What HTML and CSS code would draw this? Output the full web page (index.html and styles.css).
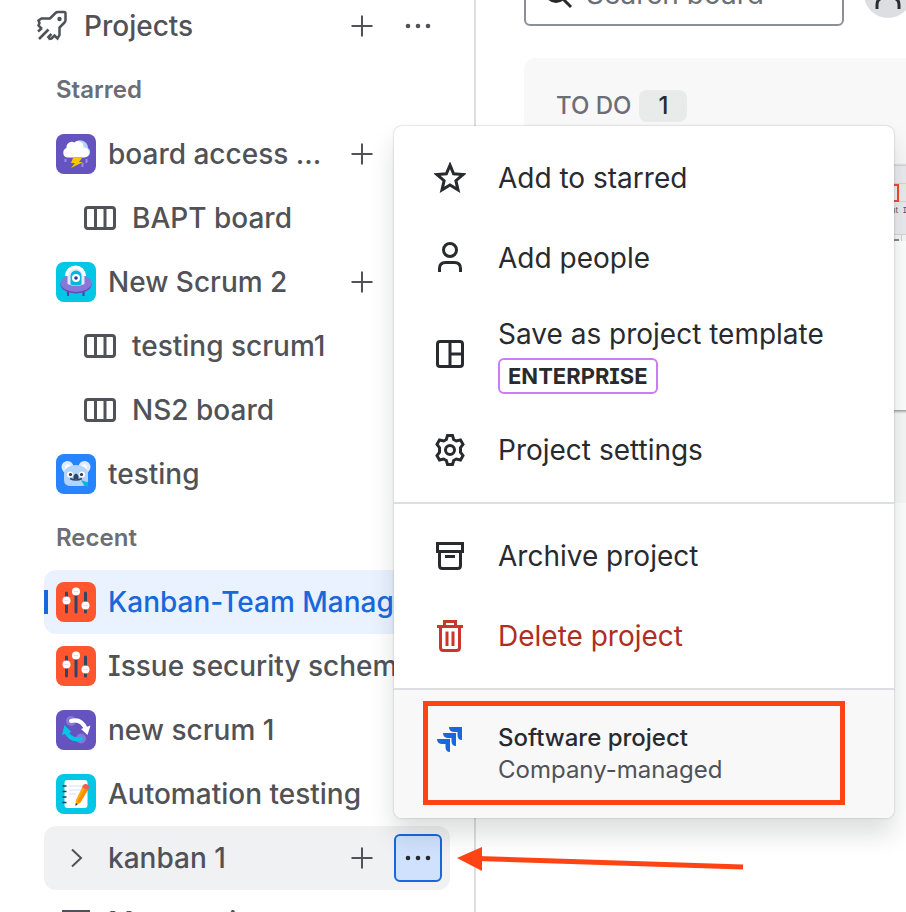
FILE: index.html
```
<!DOCTYPE html>
<html lang="en">
<head>
  <meta charset="UTF-8">
  <meta name="viewport" content="width=device-width, initial-scale=1.0">
  <title>Projects</title>
  <link rel="stylesheet" href="styles.css">
</head>
<body>
  <!-- shared icons -->
  <svg class="sprite" aria-hidden="true">
    <symbol id="icon-plus" viewBox="0 0 32 32"><path d="M16 5.500v21M5.500 16h21"/></symbol>
    <symbol id="icon-more" viewBox="0 0 32 32">
      <g fill="currentColor" stroke="none"><circle cx="6" cy="16" r="2.300"/><circle cx="16" cy="16" r="2.300"/><circle cx="26" cy="16" r="2.300"/></g>
    </symbol>
    <symbol id="icon-board" viewBox="0 0 32 32"><rect x="1.500" y="5.500" width="29" height="21" rx="2.500"/><path d="M11.500 5v22M21 5v22"/></symbol>
    <symbol id="avatar-kanban" viewBox="0 0 40 40">
      <rect width="40" height="40" rx="8" fill="#ff5630"/>
      <path d="M10.500 11v19M20 11v19M29.500 11v19" stroke="#344563" stroke-width="3" stroke-linecap="round"/>
      <g fill="#fff"><circle cx="10.500" cy="18.500" r="4"/><circle cx="20" cy="9.500" r="4"/><circle cx="29.500" cy="23.500" r="4"/></g>
      <path d="M8.500 18.500h4M18 9.500h4M27.500 23.500h4" stroke="#dfe1e6"/>
    </symbol>
  </svg>

  <div class="app">
    <nav class="sidebar">
      <div class="nav-row nav-top">
        <svg class="icon rocket" viewBox="0 0 32 32"><path d="M6 19L2.500 15.500 3.500 13 2.500 10.500 5.500 8.500H14L19.500 3q1-1 2.500-1H28q1.500 0 1.500 1.500V10q0 1.500-1 2.500L23.500 17.500V25L21.500 28.500 18.500 25.500 15.500 28.500 12.500 29M3 29l9.500-9.500M2 21.500L6 18M11.500 28l4-4"/><circle cx="23.500" cy="9" r="2.200" fill="currentColor" stroke="none"/></svg>
        <span class="nav-label">Projects</span>
        <button class="icon-btn" aria-label="Create project"><svg class="icon"><use href="#icon-plus"/></svg></button>
        <button class="icon-btn" aria-label="More actions"><svg class="icon"><use href="#icon-more"/></svg></button>
      </div>

      <h2 class="nav-heading">Starred</h2>
      <div class="nav-row has-action">
        <svg class="avatar" viewBox="0 0 40 40">
          <rect width="40" height="40" rx="8" fill="#6554c0"/>
          <path d="M20 23h10a5 5 0 0 0 2-9 8 8 0 0 0-13-6z" fill="#b3d4ff"/>
          <path d="M11 23.500a5 5 0 0 1-.5-9.500 5.500 5.500 0 0 1 8-5.500 5.500 5.500 0 0 1 9 5 5 5 0 0 1 1 10z" fill="#fff"/>
          <path d="M17 24h9l-3 4h4l-12 6 4-5h-4z" fill="#ffc400"/>
          <path d="M9.500 25v3M30.500 25v4M26.500 29v4" stroke="#998dd9" stroke-width="2"/>
        </svg>
        <a class="nav-label" href="#">board access ...</a>
        <button class="icon-btn" aria-label="Create board"><svg class="icon"><use href="#icon-plus"/></svg></button>
      </div>
      <div class="nav-row nested">
        <svg class="icon"><use href="#icon-board"/></svg>
        <a class="nav-label" href="#">BAPT board</a>
      </div>
      <div class="nav-row has-action">
        <svg class="avatar" viewBox="0 0 40 40">
          <rect width="40" height="40" rx="8" fill="#00c7e5"/>
          <path d="M12 28v6M27.500 28v6" stroke="#5243aa" stroke-width="2.200"/>
          <ellipse cx="20" cy="22.500" rx="15.500" ry="9" fill="#5e4db2"/>
          <ellipse cx="20" cy="21" rx="15.500" ry="9" fill="#8777d9"/>
          <path d="M11.500 22V14a8.500 8.500 0 0 1 17 0v8q-8.500 4-17 0z" fill="#eae6ff"/>
          <path d="M10.500 14a9 9 0 0 1 18 0" fill="none" stroke="#fff" stroke-width="3"/>
          <path d="M14.500 22.500V14a5.500 5.500 0 0 1 11 0v8.500q-5.500 2-11 0z" fill="#00b8d9"/>
          <circle cx="20" cy="16" r="4" fill="#fff"/><circle cx="20" cy="16" r="1.800" fill="#403294"/>
        </svg>
        <a class="nav-label" href="#">New Scrum 2</a>
        <button class="icon-btn" aria-label="Create board"><svg class="icon"><use href="#icon-plus"/></svg></button>
      </div>
      <div class="nav-row nested">
        <svg class="icon"><use href="#icon-board"/></svg>
        <a class="nav-label" href="#">testing scrum1</a>
      </div>
      <div class="nav-row nested">
        <svg class="icon"><use href="#icon-board"/></svg>
        <a class="nav-label" href="#">NS2 board</a>
      </div>
      <div class="nav-row">
        <svg class="avatar" viewBox="0 0 40 40">
          <rect width="40" height="40" rx="8" fill="#2684ff"/>
          <circle cx="11.500" cy="13" r="6" fill="#deebff"/><circle cx="28.500" cy="13" r="6" fill="#deebff"/>
          <circle cx="12" cy="13.500" r="3" fill="#fff"/><circle cx="28" cy="13.500" r="3" fill="#fff"/>
          <path d="M8 18q3-7 12-7t12 7v8q0 6-7 6H15q-7 0-7-6z" fill="#b3d4ff"/>
          <circle cx="14" cy="20.500" r="3" fill="#fff"/><circle cx="26" cy="20.500" r="3" fill="#fff"/>
          <circle cx="14.500" cy="20.500" r="1.600" fill="#253858"/><circle cx="25.500" cy="20.500" r="1.600" fill="#253858"/>
          <path d="M17.500 25v-3q2.500-5 5 0v3z" fill="#344563"/>
          <path d="M14 24.500q6 3 12 0" fill="none" stroke="#344563" stroke-width="1.500"/>
          <path d="M25 26l7 2.500v4.500l-4-2z" fill="#00b8d9"/>
        </svg>
        <a class="nav-label" href="#">testing</a>
      </div>

      <h2 class="nav-heading">Recent</h2>
      <div class="nav-row selected">
        <svg class="avatar"><use href="#avatar-kanban"/></svg>
        <a class="nav-label" href="#">Kanban-Team Managed</a>
      </div>
      <div class="nav-row">
        <svg class="avatar"><use href="#avatar-kanban"/></svg>
        <a class="nav-label" href="#">Issue security scheme</a>
      </div>
      <div class="nav-row">
        <svg class="avatar" viewBox="0 0 40 40">
          <rect width="40" height="40" rx="8" fill="#6554c0"/>
          <circle cx="15" cy="11" r="5" fill="#8777d9"/><circle cx="25" cy="28.500" r="5" fill="#8777d9"/>
          <path d="M15 11q10-3 15 8" fill="none" stroke="#fff" stroke-width="4" stroke-linecap="round"/><path d="M25 19l9.500-3.500-3 9.500z" fill="#fff"/>
          <path d="M25 28.500q-10 3-15-7" fill="none" stroke="#00c7e5" stroke-width="4" stroke-linecap="round"/><path d="M6 25l2.500-10 7 7z" fill="#00c7e5"/>
        </svg>
        <a class="nav-label" href="#">new scrum 1</a>
      </div>
      <div class="nav-row">
        <svg class="avatar" viewBox="0 0 40 40">
          <rect width="40" height="40" rx="8" fill="#00c7e5"/>
          <rect x="8.500" y="6" width="23" height="28" rx="3" fill="#fff"/>
          <path d="M13 12h14M13 16h12M13 20h7" stroke="#deebff" stroke-width="1.500"/>
          <path d="M6.500 12h4M6.500 17.500h4M6.500 23h4M6.500 28.500h4" stroke="#253858" stroke-width="1.500"/>
          <path d="M26 13.500l5.500 3-7.500 12.500-4.500 3 .5-6z" fill="#ffab00"/><path d="M28.500 15l3 1.500-7.500 12.500-2.500-1.500z" fill="#ff8b00"/>
          <path d="M26 13.500q1-4 4-3.500 4 1 3 4l-1.500 2.500z" fill="#f15b50"/><path d="M19.800 29l1.800 1-2.100 2z" fill="#253858"/>
        </svg>
        <a class="nav-label" href="#">Automation testing</a>
      </div>
      <div class="nav-row hovered">
        <svg class="avatar chevron" viewBox="0 0 40 40"><path d="M16 11.500l9 8.500-9 8.500"/></svg>
        <a class="nav-label" href="#">kanban 1</a>
        <button class="icon-btn" aria-label="Create board"><svg class="icon"><use href="#icon-plus"/></svg></button>
        <button class="icon-btn pressed" aria-label="More actions" aria-expanded="true"><svg class="icon"><use href="#icon-more"/></svg></button>
      </div>
      <div class="nav-row">
        <svg class="avatar" viewBox="0 0 40 40"><path d="M6 9.500h28M6 20h28M6 30h28" stroke="currentColor" stroke-width="3"/></svg>
        <a class="nav-label" href="#">More projects</a>
      </div>
    </nav>

    <main class="board">
      <div class="toolbar">
        <label class="search">
          <svg class="icon" viewBox="0 0 32 32"><circle cx="14" cy="14" r="9.500"/><path d="M21 21l8 8"/></svg>
          <input type="text" placeholder="Search board" aria-label="Search board">
        </label>
        <span class="user"><svg class="icon" viewBox="0 0 32 32"><circle cx="16" cy="8" r="6"/><path d="M5 31v-4q0-7 7-7h8q7 0 7 7v4"/></svg></span>
      </div>
      <section class="column">
        <h2 class="column-title">TO DO <span class="count">1</span></h2>
        <article class="card">
          <svg class="card-cover" viewBox="0 0 380 76">
            <rect width="380" height="76" fill="#ebecef"/>
            <path d="M0 .5h380M0 18.500h380M0 36.500h380M0 69.500h380" stroke="#d3d5d9"/>
            <rect x="310" y="20" width="56" height="16" fill="#f1f2f4" stroke="#f4492e" stroke-width="2"/>
            <rect y="70" width="380" height="6" fill="#f7f7f8"/>
            <path d="M369.500 70v6" stroke="#d3d5d9"/>
            <path d="M360 75h7" stroke="#85888e" stroke-width="2"/>
            <text class="cover-text" x="366" y="48" text-anchor="end">Client</text><text class="cover-text" x="371" y="48">I</text>
          </svg>
        </article>
      </section>
    </main>

    <div class="menu" role="menu">
      <div class="menu-group">
        <button class="menu-item" role="menuitem">
          <svg class="icon" viewBox="0 0 32 32"><path d="M16 3.200l3.600 8.600 9.300.8-7 6.100 2.100 9.100L16 23l-8 4.800 2.100-9.100-7-6.100 9.300-.8z"/></svg>
          <span>Add to starred</span>
        </button>
        <button class="menu-item" role="menuitem">
          <svg class="icon" viewBox="0 0 32 32"><circle cx="16" cy="8" r="6.500"/><path d="M5.500 30v-3.500q0-6 6-6h9q6 0 6 6V30"/></svg>
          <span>Add people</span>
        </button>
        <button class="menu-item" role="menuitem">
          <svg class="icon" viewBox="0 0 32 32"><rect x="3.500" y="3.500" width="25" height="25" rx="2.500"/><path d="M16 3v26M16 16h12"/></svg>
          <span class="menu-text">Save as project template <span class="lozenge">ENTERPRISE</span></span>
        </button>
        <button class="menu-item" role="menuitem">
          <svg class="icon" viewBox="0 0 32 32"><path d="M13.500 1.500h5l1.200 4 2.600 1.500 4.200-1 2.500 4.300-2.500 3.400v4.600l2.500 3.400-2.500 4.300-4.200-1-2.600 1.500-1.200 4h-5l-1.200-4L9.700 25l-4.200 1L3 21.700l2.500-3.400v-4.600L3 10.300 5.500 6l4.200 1 2.600-1.500z"/><circle cx="16" cy="16" r="4.500"/></svg>
          <span>Project settings</span>
        </button>
      </div>
      <div class="menu-group">
        <button class="menu-item" role="menuitem">
          <svg class="icon" viewBox="0 0 32 32"><path d="M3.500 3.500h25v8h-25zM5.500 11.500v14q0 3 3 3h15q3 0 3-3v-14M11 16.500h10"/></svg>
          <span>Archive project</span>
        </button>
        <button class="menu-item danger" role="menuitem">
          <svg class="icon" viewBox="0 0 32 32"><path d="M3 6.500h26M10.500 6V1.500h11V6M6.500 6.500v21q0 3 3 3h13q3 0 3-3v-21M13 11.500v14.500M19 11.500v14.500"/></svg>
          <span>Delete project</span>
        </button>
      </div>
      <div class="menu-footer">
        <svg class="icon" viewBox="0 0 32 32"><g fill="#1868db" stroke="none"><path d="M15 5H28V18q-4.500 0-4.500-5v-3h-3q-5.500 0-5.500-5z"/><path d="M9 11H22V24q-4.500 0-4.500-5v-3h-3q-5.500 0-5.500-5z"/><path d="M3 17H16V30q-4.500 0-4.500-5v-3h-3q-5.500 0-5.500-5z"/></g></svg>
        <div>
          <div class="type-name">Software project</div>
          <div class="type-detail">Company-managed</div>
        </div>
        <div class="highlight"></div>
      </div>
    </div>

    <svg class="pointer" viewBox="0 0 288 26" aria-hidden="true"><path d="M20 12.500L286 21" stroke="#ff4314" stroke-width="5"/><path d="M0 12L25 1V25z" fill="#ff4314"/></svg>
  </div>
</body>
</html>
```
FILE: styles.css
```
* {
  margin: 0;
  padding: 0;
  box-sizing: border-box;
}

body {
  font-family: Inter, 'Liberation Sans', sans-serif;
  font-feature-settings: 'cv08'; /* capital I with serifs */
  font-size: 28px;
  line-height: 40px;
  color: #292a2e;
  background: #fff;
}

button {
  font: inherit;
  font-feature-settings: inherit;
  color: inherit;
  background: none;
  border: none;
  cursor: pointer;
}

a {
  color: inherit;
  text-decoration: none;
}

.sprite {
  position: absolute;
  width: 0;
  height: 0;
}

.icon {
  width: 32px;
  height: 32px;
  flex-shrink: 0;
  fill: none;
  stroke: currentColor;
  stroke-width: 3;
}

.icon.rocket {
  stroke-width: 2.5;
}

.app {
  position: relative;
  display: flex;
  height: 100vh;
  overflow: hidden;
}

/* sidebar, scrolled down a little */
.sidebar {
  flex: 0 0 476px;
  height: 1200px;
  margin-top: -6px;
  padding: 0 24px 0 44px;
  border-right: 2px solid #dddee1;
  color: #505258;
}

.nav-row {
  display: flex;
  align-items: center;
  height: 64px;
  padding: 0 8px 0 12px;
  gap: 12px;
  border-radius: 12px;
  font-weight: 500;
  white-space: nowrap;
}

.nav-top {
  margin-left: -20px;
  gap: 16px;
}

.nav-row.has-action {
  padding-right: 64px;
}

.nav-row.nested {
  padding-left: 40px;
  gap: 16px;
}

.nav-label {
  flex: 1;
  min-width: 0;
}

.nav-heading {
  height: 64px;
  padding-left: 12px;
  font-size: 24px;
  font-weight: 600;
  line-height: 64px;
  color: #6b6e76;
}

.avatar {
  width: 40px;
  height: 40px;
  flex-shrink: 0;
}

.chevron {
  fill: none;
  stroke: currentColor;
  stroke-width: 2;
}

.icon-btn {
  display: flex;
  align-items: center;
  justify-content: center;
  width: 48px;
  height: 48px;
  border-radius: 6px;
}

.nav-row .icon-btn {
  margin-left: -4px;
}

.nav-top .icon-btn {
  margin-left: -8px;
}

.icon-btn .icon {
  stroke-width: 2;
}

.icon-btn.pressed {
  border: 2px solid #1868db;
  background: #cfe1fd;
  color: #292a2e;
}

.selected {
  position: relative;
  background: #e9f2fe;
  color: #1868db;
}

.selected::before {
  content: '';
  position: absolute;
  left: 0;
  width: 4px;
  height: 24px;
  background: #1868db;
}

.hovered {
  background: #f0f1f2;
}

/* board */
.board {
  flex: 1;
  min-width: 0;
  padding-left: 48px;
}

.toolbar {
  display: flex;
  gap: 20px;
  margin-top: -38px;
  margin-bottom: 32px;
}

.search {
  display: flex;
  align-items: center;
  flex-shrink: 0;
  width: 320px;
  height: 64px;
  padding-left: 16px;
  gap: 12px;
  border: 2px solid #8c8f97;
  border-radius: 6px;
}

.search input {
  width: 240px;
  border: none;
  outline: none;
  background: none;
  font: inherit;
}

.search input::placeholder {
  color: #6b6e76;
}

.user {
  display: flex;
  align-items: center;
  justify-content: center;
  width: 48px;
  height: 48px;
  margin-top: 8px;
  border-radius: 50%;
  background: #dddee1;
  flex-shrink: 0;
}

.column {
  height: 445px;
  padding: 32px 8px 0;
  border-radius: 12px 0 0 12px;
  background: #f8f8f8;
}

.column-title {
  display: flex;
  align-items: center;
  gap: 8px;
  padding-left: 24px;
  font-size: 24px;
  font-weight: 500;
  line-height: 32px;
  color: #6b6e76;
}

.count {
  width: 48px;
  border-radius: 8px;
  background: #e9ebea;
  color: #292a2e;
  text-align: center;
}

.card {
  width: 560px;
  height: 245px;
  margin-top: 43px;
  background: #fff;
  box-shadow: 0 2px 2px rgba(30, 31, 33, 0.3), 0 0 2px rgba(30, 31, 33, 0.3);
}

.card-cover {
  display: block;
  width: 380px;
  height: 76px;
}

.cover-text {
  font-size: 8px;
  fill: #505258;
}

/* context menu */
.menu {
  position: absolute;
  top: 126px;
  left: 394px;
  width: 500px;
  border-radius: 8px;
  background: #fff;
  box-shadow: 0 16px 24px rgba(30, 31, 33, 0.15), 0 0 2px rgba(30, 31, 33, 0.31);
}

.menu-group {
  padding: 12px 0;
  border-bottom: 2px solid #dddee1;
}

.menu-item {
  display: flex;
  align-items: center;
  width: 100%;
  min-height: 80px;
  padding: 16px 40px;
  gap: 32px;
  text-align: left;
}

.menu-text {
  display: flex;
  flex-direction: column;
  align-items: flex-start;
  gap: 4px;
}

.lozenge {
  padding: 0 8px;
  border: 2px solid #c97cf4;
  border-radius: 6px;
  font-size: 22px;
  font-weight: 700;
  line-height: 32px;
}

.danger {
  color: #ae2e24;
}

.danger .icon {
  color: #c9372c;
}

.menu-footer {
  position: relative;
  display: flex;
  padding: 32px 40px;
  gap: 32px;
  border-radius: 0 0 8px 8px;
  background: #f8f8f8;
  font-size: 24px;
  line-height: 32px;
}

.type-name {
  font-weight: 500;
}

.type-detail {
  color: #505258;
}

/* callouts */
.highlight {
  position: absolute;
  inset: 11px 49px 13px 29px;
  border: 5px solid #ff4314;
}

.pointer {
  position: absolute;
  top: 846px;
  left: 457px;
  width: 288px;
  height: 26px;
}
```
